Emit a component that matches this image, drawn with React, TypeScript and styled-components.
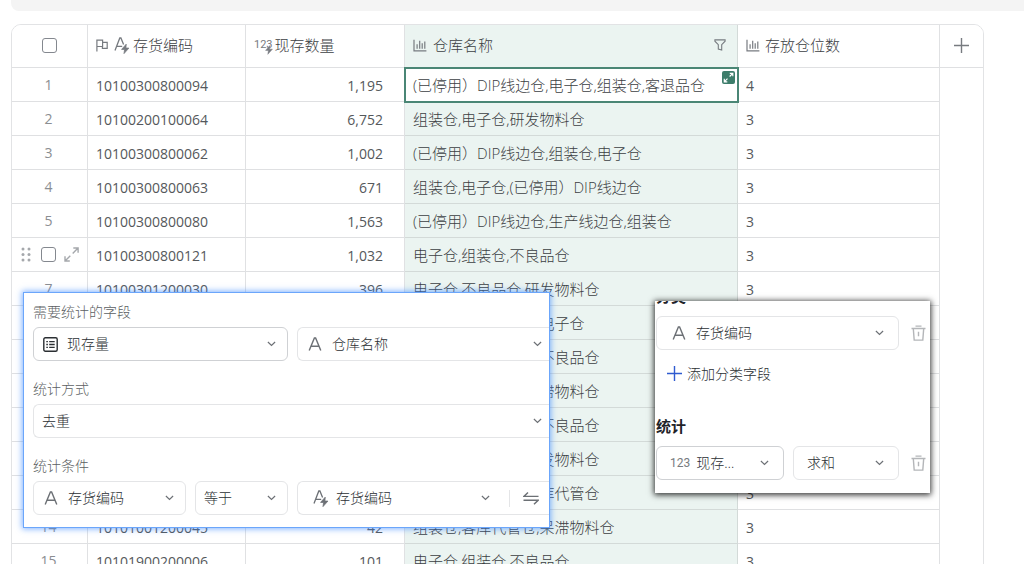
import React from "react";
import styled, { createGlobalStyle, css } from "styled-components";

const font = `"Open Sans", "Noto Sans CJK SC", sans-serif`;

const GlobalStyle = createGlobalStyle`
  * { box-sizing: border-box; }
  body {
    margin: 0;
    background: #fff;
    color: #3c4043;
    font-family: ${font};
    font-size: 15px;
    font-weight: 300;
  }
  button, select, input { font: inherit; color: inherit; }
`;

const Page = styled.main`
  position: relative;
  height: 100vh;
  overflow: hidden;
`;

const TopBar = styled.div`
  height: 11px;
  margin: 0 0 13px 11px;
  background: #f4f4f4;
  border-bottom-left-radius: 8px;
`;

const TableFrame = styled.div`
  margin: 0 40px 0 11px;
  border: 1px solid #e2e3e5;
  border-radius: 10px;
  overflow: hidden;
`;

const Table = styled.table`
  width: 100%;
  table-layout: fixed;
  border-collapse: separate;
  border-spacing: 0;
`;

const Col = styled.col<{ $w?: number }>`
  ${(p) => p.$w && `width: ${p.$w}px;`}
`;

const cellLines = css<{ $tint?: boolean }>`
  border-right: 1px solid ${(p) => (p.$tint ? "#d3dad8" : "#e0e1e3")};
  border-bottom: 1px solid ${(p) => (p.$tint ? "#d3dad8" : "#dfe0e2")};
  background: ${(p) => (p.$tint ? "#ebf4f1" : "#fff")};
  &:last-child { border-right: 0; }
`;

const Th = styled.th<{ $tint?: boolean }>`
  ${cellLines}
  height: 43px;
  padding: 0 ${(p) => (p.$tint ? 11 : 8)}px 2px 8px;
  font-weight: 300;
  text-align: left;
`;

const HeadLabel = styled.div<{ $gap?: number }>`
  display: flex;
  align-items: center;
  gap: ${(p) => p.$gap ?? 6}px;
  color: #3c4043;
  line-height: 20px;
  white-space: nowrap;
  svg { color: #777b80; flex: none; }
`;

const HeadText = styled.span`
  flex: 1;
`;

const Td = styled.td<{ $tint?: boolean; $right?: boolean; $selected?: boolean }>`
  ${cellLines}
  height: 34px;
  padding: 1px 8px 0;
  line-height: 20px;
  white-space: nowrap;
  ${(p) => p.$right && "text-align: right; padding-right: 21px;"}
  ${(p) =>
    p.$selected &&
    "position: relative; background: #fff; outline: 2px solid #4a8675; outline-offset: -1px;"}
`;

const Digits = styled.span`
  font-size: 14px;
  font-weight: 400;
  color: #55585b;
`;

const IndexCell = styled.td`
  ${cellLines}
  height: 34px;
  padding: 0 2px 0 0;
  text-align: center;
  font-size: 14px;
  font-weight: 400;
  line-height: 20px;
  color: #8b8e92;
`;

const RowTools = styled.div`
  display: flex;
  align-items: center;
  justify-content: center;
  gap: 8px;
  padding-left: 3px;
  color: #a5a8ac;
`;

const EmptyCell = styled.td`
  padding: 0;
`;

const CheckBox = styled.input`
  appearance: none;
  display: block;
  width: 15px;
  height: 15px;
  margin: 0;
  border: 1px solid #84888f;
  border-radius: 3px;
  background: #fff;
`;

const CenterBox = styled.div`
  display: flex;
  justify-content: center;
`;

const IconButton = styled.button`
  display: flex;
  padding: 0;
  border: 0;
  background: none;
  color: #777b80;
`;

const ExpandBadge = styled.button`
  position: absolute;
  top: 3px;
  right: 2px;
  display: flex;
  padding: 0;
  border: 0;
  border-radius: 2px;
  background: #3d7d6b;
  color: #fff;
`;

const Popup = styled.section`
  position: absolute;
  overflow: hidden;
  background: #fff;
  font-size: 14px;
`;

const ConditionPopup = styled(Popup)`
  left: 24px;
  top: 293px;
  width: 525px;
  padding: 8px 0 12px 9px;
  box-shadow: 0 0 0 1px #6ba6fb, 0 0 6px 2px rgba(64, 140, 255, 0.65);
`;

const SummaryPopup = styled(Popup)`
  left: 655px;
  top: 301px;
  width: 275px;
  height: 192px;
  display: flex;
  flex-direction: column;
  justify-content: flex-end;
  padding: 0 4px 13px 1px;
  box-shadow: 0 1px 6px 1px rgba(0, 0, 0, 0.8);
`;

const Group = styled.div`
  & + & { margin-top: 17px; }
`;

const Caption = styled.div`
  height: 22px;
  margin-bottom: 4px;
  line-height: 22px;
  color: #5c5f63;
`;

const Heading = styled.h2`
  flex: none;
  height: 22px;
  margin: 0 0 8px;
  font-size: 15px;
  font-weight: 700;
  line-height: 20px;
  color: #1f2329;
`;

const Fields = styled.div`
  display: flex;
  flex: none;
  align-items: center;
  gap: 9px;
`;

const FieldBox = styled.div<{
  $w?: number;
  $strong?: boolean;
  $open?: boolean;
  $lead: number;
  $trail: number;
}>`
  display: flex;
  align-items: center;
  height: 34px;
  padding: 0 ${(p) => p.$trail}px 0 ${(p) => p.$lead}px;
  border: 1px solid ${(p) => (p.$strong ? "#cfd1d4" : "#e4e5e7")};
  border-radius: 6px;
  background: #fff;
  ${(p) => (p.$w ? `width: ${p.$w}px; flex: none;` : "flex: 1; min-width: 0;")}
  ${(p) =>
    p.$open &&
    "border-right: 0; border-top-right-radius: 0; border-bottom-right-radius: 0;"}
  svg { flex: none; color: #6c7075; }
`;

const Select = styled.select<{ $gap: number }>`
  appearance: none;
  flex: 1;
  min-width: 0;
  height: 24px;
  margin: 0 16px 0 ${(p) => p.$gap}px;
  padding: 0 0 1px;
  border: 0;
  background: transparent;
  color: #2b2f33;
  text-overflow: ellipsis;
  overflow: hidden;
  white-space: nowrap;
`;

const NumberMark = styled.span<{ $small?: boolean }>`
  position: relative;
  display: flex;
  align-items: center;
  font-family: Roboto, sans-serif;
  font-size: ${(p) => (p.$small ? 11 : 12)}px;
  font-weight: 400;
  line-height: 14px;
  color: #777b80;
`;

const CornerBolt = styled.span`
  position: absolute;
  right: 0;
  top: 7px;
  display: flex;
`;

const Divider = styled.span`
  flex: none;
  width: 1px;
  height: 17px;
  margin: 0 13px 0 19px;
  background: #e4e5e7;
`;

const AddButton = styled.button`
  display: flex;
  flex: none;
  align-items: center;
  gap: 5px;
  align-self: flex-start;
  height: 22px;
  margin: 12px 0 32px 11px;
  padding: 0;
  border: 0;
  background: none;
  color: #2b2f33;
  svg { color: #2f5bd0; }
`;

const TrashButton = styled(IconButton)`
  margin-left: 3px;
  color: #b4b6b9;
`;

const stroke = { fill: "none", stroke: "currentColor" } as const;

const Chevron = () => (
  <svg width="9" height="6" viewBox="0 0 9 6" {...stroke} strokeWidth="1.2">
    <path d="M.9 1 4.5 4.5 8.1 1" />
  </svg>
);

const LetterIcon = () => (
  <svg width="14" height="14" viewBox="0 0 14 14" {...stroke} strokeWidth="1.4">
    <path d="M1.2 13.5 6.4 1h1.2l5.2 12.5M3.1 9.2h7.8" />
  </svg>
);

const BOLT = "M12.2 7.2 7.6 12.4h3l-.6 4.2 4.9-5.5h-3z";

const LetterBoltIcon = () => (
  <svg width="16" height="17" viewBox="0 0 16 17" {...stroke} strokeWidth="1.3">
    <path d="M1 13.5 5.8 1h1.1l2.7 6.6M2.6 9.4h5.6" />
    <path d={BOLT} fill="currentColor" strokeWidth=".8" />
  </svg>
);

const FlagIcon = () => (
  <svg width="12" height="13" viewBox="0 0 12 13" {...stroke} strokeWidth="1.2">
    <path d="M.9 12.5V1.1h5.7v6.4H.9M6.6 3.4h4.6v5.9H6.4V7.5" />
  </svg>
);

const ChartIcon = () => (
  <svg width="14" height="13" viewBox="0 0 14 13" {...stroke} strokeWidth="1.2">
    <path d="M1 .8v11.1h12.4M4.1 5.2v4.6M6.7 1.8v8M9.2 4.3v5.5M11.8 2.6v7.2" />
  </svg>
);

const FilterIcon = () => (
  <svg width="12" height="12" viewBox="0 0 12 12" {...stroke} strokeWidth="1.1">
    <path d="M.9.9h10.2v1.3L7.7 5.7v5.4l-3.4-1V5.7L.9 2.2z" />
  </svg>
);

const PlusIcon = () => (
  <svg width="15" height="15" viewBox="0 0 15 15" {...stroke} strokeWidth="1.4">
    <path d="M7.5 0v15M0 7.5h15" />
  </svg>
);

const ExpandIcon = () => (
  <svg width="15" height="15" viewBox="0 0 15 15" {...stroke} strokeWidth="1.4">
    <path d="M9.3 1h4.8v4.8M14 1.1 8.7 6.4M1 9.2V14h4.8M1 14l5.3-5.3" />
  </svg>
);

const BadgeIcon = () => (
  <svg width="13" height="13" viewBox="0 0 13 13" {...stroke} strokeWidth="1.2">
    <path d="M7.8 2.3h3v3M10.8 2.3 7.6 5.5M2.3 7.8v3h3M2.3 10.8l3.2-3.2" />
  </svg>
);

const DragIcon = () => (
  <svg width="12" height="15" viewBox="0 0 12 15" fill="currentColor">
    {[2, 7.5, 13].map((y) => (
      <g key={y}>
        <circle cx="2" cy={y} r="1.5" />
        <circle cx="8" cy={y} r="1.5" />
      </g>
    ))}
  </svg>
);

const SheetIcon = () => (
  <svg width="15" height="15" viewBox="0 0 15 15" {...stroke} stroke="#2b2f33">
    <rect x=".8" y=".8" width="13.4" height="13.4" rx="1.5" strokeWidth="1.4" />
    <path d="M3.3 4.6h1.6M3.3 7.5h1.6M3.3 10.4h1.6M6.2 4.6h5.5M6.2 7.5h5.5M6.2 10.4h5.5" strokeWidth="1.3" />
  </svg>
);

const SwapIcon = () => (
  <svg width="16" height="13" viewBox="0 0 16 13" {...stroke} strokeWidth="1.4">
    <path d="M5 .6.9 4.4h14.6M.5 8.3h14.6L11 12.3" />
  </svg>
);

const TrashIcon = () => (
  <svg width="15" height="16" viewBox="0 0 15 16" {...stroke} strokeWidth="1.4">
    <path d="M.5 3.5h14M4.5 1.1h6M2.3 3.6l.9 11.5h8.6l.9-11.5M7.5 6.8v4.4" />
  </svg>
);

const SmallBolt = () => (
  <svg width="8" height="10" viewBox="7 7 8.5 10" fill="currentColor" stroke="currentColor" strokeWidth=".5">
    <path d={BOLT} />
  </svg>
);

type FieldProps = {
  label: string;
  value: string;
  icon?: React.ReactNode;
  width?: number;
  lead?: number;
  trail?: number;
  gap?: number;
  strong?: boolean;
  open?: boolean;
  tail?: React.ReactNode;
};

const Field = ({
  label,
  value,
  icon,
  width,
  lead = 10,
  trail = 11,
  gap = 10,
  strong,
  open,
  tail,
}: FieldProps) => (
  <FieldBox $w={width} $lead={lead} $trail={trail} $strong={strong} $open={open}>
    {icon}
    <Select aria-label={label} $gap={icon ? gap : 0} defaultValue={value}>
      <option>{value}</option>
    </Select>
    <Chevron />
    {tail}
  </FieldBox>
);

type Row = [code: string, stock: string, stores: string, count: string];

const rows: Row[] = [
  ["10100300800094", "1,195", "(已停用）DIP线边仓,电子仓,组装仓,客退品仓", "4"],
  ["10100200100064", "6,752", "组装仓,电子仓,研发物料仓", "3"],
  ["10100300800062", "1,002", "(已停用）DIP线边仓,组装仓,电子仓", "3"],
  ["10100300800063", "671", "组装仓,电子仓,(已停用）DIP线边仓", "3"],
  ["10100300800080", "1,563", "(已停用）DIP线边仓,生产线边仓,组装仓", "3"],
  ["10100300800121", "1,032", "电子仓,组装仓,不良品仓", "3"],
  ["10100301200030", "396", "电子仓,不良品仓,研发物料仓", "3"],
  ["10100301200031", "210", "研发物料仓,组装仓,电子仓", "3"],
  ["10100301200042", "188", "组装仓,研发物料仓,不良品仓", "3"],
  ["10100400100012", "95", "不良品仓,电子仓,呆滞物料仓", "3"],
  ["10100400100027", "320", "电子仓,研发物料仓,不良品仓", "3"],
  ["10100500300008", "76", "不良品仓,组装仓,研发物料仓", "3"],
  ["10100900100016", "54", "不良品仓,电子仓,客库代管仓", "3"],
  ["10101001200045", "42", "组装仓,客库代管仓,呆滞物料仓", "3"],
  ["10101900200006", "101", "电子仓,组装仓,不良品仓", "3"],
];

const HOVERED = 5;

export default function App() {
  return (
    <>
      <GlobalStyle />
      <Page>
        <TopBar />
        <TableFrame>
          <Table>
            <colgroup>
              <Col $w={76} />
              <Col $w={158} />
              <Col $w={159} />
              <Col />
              <Col $w={202} />
              <Col $w={43} />
            </colgroup>
            <thead>
              <tr>
                <Th>
                  <CenterBox>
                    <CheckBox type="checkbox" aria-label="全选" />
                  </CenterBox>
                </Th>
                <Th>
                  <HeadLabel $gap={3}>
                    <FlagIcon />
                    <span />
                    <LetterBoltIcon />
                    <HeadText>存货编码</HeadText>
                  </HeadLabel>
                </Th>
                <Th>
                  <HeadLabel $gap={2}>
                    <NumberMark $small>
                      123
                      <CornerBolt>
                        <SmallBolt />
                      </CornerBolt>
                    </NumberMark>
                    <HeadText>现存数量</HeadText>
                  </HeadLabel>
                </Th>
                <Th $tint>
                  <HeadLabel>
                    <ChartIcon />
                    <HeadText>仓库名称</HeadText>
                    <IconButton aria-label="筛选">
                      <FilterIcon />
                    </IconButton>
                  </HeadLabel>
                </Th>
                <Th>
                  <HeadLabel $gap={5}>
                    <ChartIcon />
                    <HeadText>存放仓位数</HeadText>
                  </HeadLabel>
                </Th>
                <Th>
                  <CenterBox>
                    <IconButton aria-label="添加字段">
                      <PlusIcon />
                    </IconButton>
                  </CenterBox>
                </Th>
              </tr>
            </thead>
            <tbody>
              {rows.map(([code, stock, stores, count], i) => (
                <tr key={code}>
                  <IndexCell>
                    {i === HOVERED ? (
                      <RowTools>
                        <DragIcon />
                        <CheckBox type="checkbox" aria-label="选择第6行" />
                        <ExpandIcon />
                      </RowTools>
                    ) : (
                      i + 1
                    )}
                  </IndexCell>
                  <Td>
                    <Digits>{code}</Digits>
                  </Td>
                  <Td $right>
                    <Digits>{stock}</Digits>
                  </Td>
                  <Td $tint $selected={i === 0}>
                    {stores}
                    {i === 0 && (
                      <ExpandBadge aria-label="展开">
                        <BadgeIcon />
                      </ExpandBadge>
                    )}
                  </Td>
                  <Td>
                    <Digits>{count}</Digits>
                  </Td>
                  <EmptyCell />
                </tr>
              ))}
            </tbody>
          </Table>
        </TableFrame>

        <ConditionPopup>
          <Group>
            <Caption>需要统计的字段</Caption>
            <Fields>
              <Field label="数据表" value="现存量" icon={<SheetIcon />} width={255} lead={9} gap={9} strong />
              <Field label="字段" value="仓库名称" icon={<LetterIcon />} trail={7} open />
            </Fields>
          </Group>
          <Group>
            <Caption>统计方式</Caption>
            <Fields>
              <Field label="统计方式" value="去重" lead={8} trail={7} open />
            </Fields>
          </Group>
          <Group>
            <Caption>统计条件</Caption>
            <Fields>
              <Field label="条件字段" value="存货编码" icon={<LetterIcon />} width={153} />
              <Field label="条件" value="等于" width={93} lead={8} />
              <Field
                label="条件值"
                value="存货编码"
                icon={<LetterBoltIcon />}
                lead={15}
                trail={10}
                gap={7}
                open
                tail={
                  <>
                    <Divider />
                    <SwapIcon />
                  </>
                }
              />
            </Fields>
          </Group>
        </ConditionPopup>

        <SummaryPopup>
          <Heading>分类</Heading>
          <Fields>
            <Field
              label="分类字段"
              value="存货编码"
              icon={<LetterIcon />}
              width={243}
              lead={15}
              trail={14}
            />
            <TrashButton aria-label="删除分类">
              <TrashIcon />
            </TrashButton>
          </Fields>
          <AddButton>
            <PlusIcon />
            添加分类字段
          </AddButton>
          <Heading>统计</Heading>
          <Fields>
            <Field
              label="统计字段"
              value="现存数量"
              icon={<NumberMark>123</NumberMark>}
              width={128}
              lead={13}
              trail={14}
              gap={6}
              strong
            />
            <Field label="计算方式" value="求和" width={106} lead={13} trail={14} />
            <TrashButton aria-label="删除统计">
              <TrashIcon />
            </TrashButton>
          </Fields>
        </SummaryPopup>
      </Page>
    </>
  );
}
